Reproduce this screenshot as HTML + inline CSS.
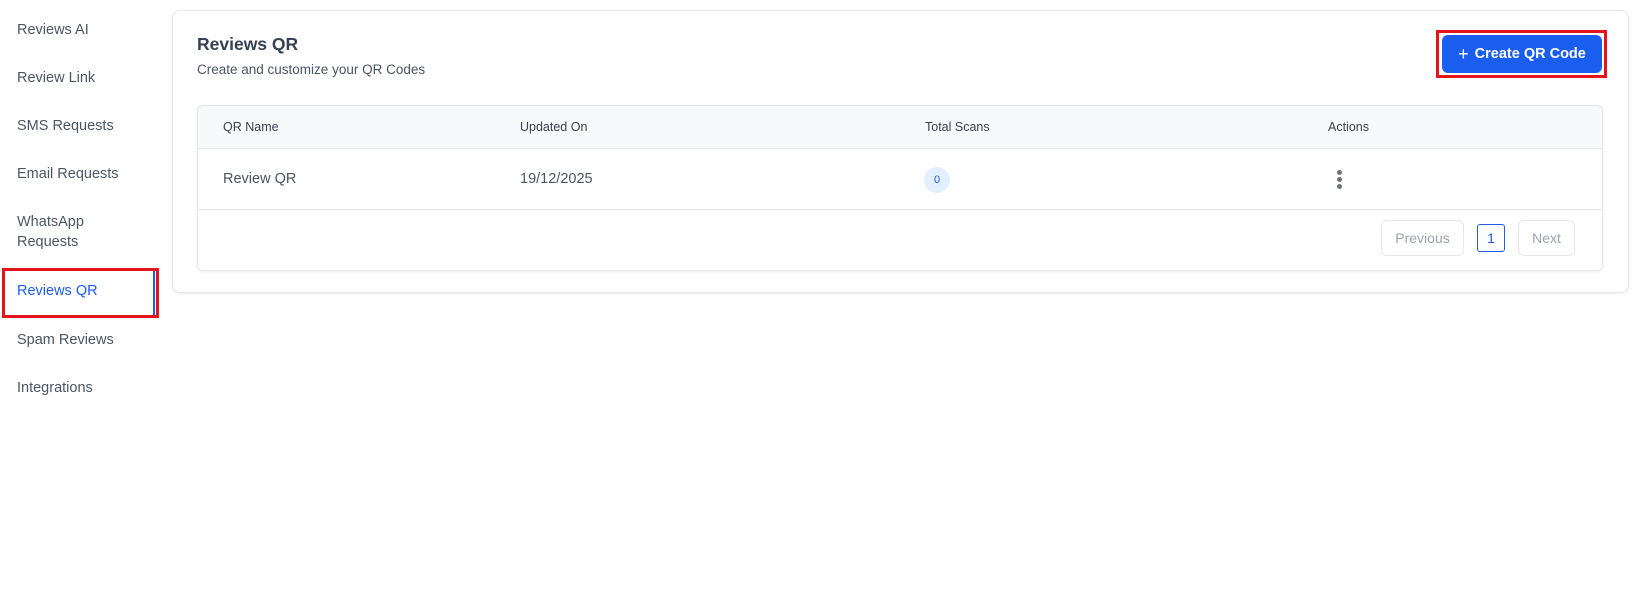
<!DOCTYPE html>
<html><head><style>
*{box-sizing:border-box;margin:0;padding:0}
body{width:1641px;height:600px;background:#fff;font-family:"Liberation Sans",Arial,sans-serif;position:relative;overflow:hidden;color:#374151}
.s{position:absolute;left:17px;font-size:14.5px;color:#4b5563;line-height:20px}
.card{position:absolute;left:172px;top:10px;width:1457px;height:283px;border:1px solid #e5e7eb;border-radius:8px;box-shadow:0 1px 3px rgba(0,0,0,.08)}
.tbl{position:absolute;left:197px;top:105px;width:1406px;height:166px;border:1px solid #e5e7eb;border-radius:6px;box-shadow:0 1px 3px rgba(0,0,0,.08);overflow:hidden}
.hd{position:absolute;left:0;top:0;width:100%;height:43px;background:#f8f9fb;border-bottom:1px solid #e5e7eb}
.row{position:absolute;left:0;top:43px;width:100%;height:61px;border-bottom:1px solid #e5e7eb}
.a{position:absolute;font-size:12.5px;color:#374151}
.c{position:absolute;font-size:14.5px;color:#4b5563}
.pb{position:absolute;border:1px solid #e5e7eb;border-radius:6px;color:#9ca3af;font-size:14px;display:flex;align-items:center;justify-content:center}
</style></head><body>
<div class="s" style="top:20px">Reviews AI</div>
<div class="s" style="top:68px">Review Link</div>
<div class="s" style="top:116px">SMS Requests</div>
<div class="s" style="top:164px">Email Requests</div>
<div class="s" style="top:212px">WhatsApp<br>Requests</div>
<div class="s" style="top:281px;color:#1d5cf0">Reviews QR</div>
<div style="position:absolute;left:2px;top:268px;width:157px;height:50px;border:3px solid #e3141b"></div>
<div style="position:absolute;left:153px;top:271px;width:2px;height:44px;background:#1d5cf0"></div>
<div class="s" style="top:330px">Spam Reviews</div>
<div class="s" style="top:378px">Integrations</div>

<div class="card"></div>
<div style="position:absolute;left:197px;top:34px;font-size:17.5px;font-weight:bold;color:#374151">Reviews QR</div>
<div style="position:absolute;left:197px;top:62px;font-size:13.5px;color:#4b5563">Create and customize your QR Codes</div>
<div style="position:absolute;left:1436px;top:30px;width:171px;height:48px;border:3px solid #e3141b"></div>
<div style="position:absolute;left:1442px;top:35px;width:160px;height:38px;background:#1a5ef0;border-radius:6px;color:#fff;font-size:14.5px;font-weight:bold;display:flex;align-items:center;justify-content:center;gap:6px"><span style="font-weight:normal;font-size:18px">+</span>Create QR Code</div>

<div class="tbl">
<div class="hd"></div>
<div class="row"></div>
<div class="a" style="left:25px;top:14px">QR Name</div>
<div class="a" style="left:322px;top:14px">Updated On</div>
<div class="a" style="left:727px;top:14px">Total Scans</div>
<div class="a" style="left:1130px;top:14px">Actions</div>
<div class="c" style="left:25px;top:65px">Review QR</div>
<div class="c" style="left:322px;top:65px">19/12/2025</div>
<div style="position:absolute;left:726px;top:61px;width:26px;height:26px;border-radius:50%;background:#e3effd;color:#1d5cf0;font-size:11px;display:flex;align-items:center;justify-content:center">0</div>
<div style="position:absolute;left:1139px;top:64px;width:5px">
<div style="width:5px;height:5px;border-radius:50%;background:#6b7280;margin-bottom:2px"></div>
<div style="width:5px;height:5px;border-radius:50%;background:#6b7280;margin-bottom:2px"></div>
<div style="width:5px;height:5px;border-radius:50%;background:#6b7280"></div></div>
<div class="pb" style="left:1183px;top:114px;width:83px;height:36px">Previous</div>
<div class="pb" style="left:1279px;top:118px;width:28px;height:28px;border-color:#1d5cf0;color:#1d5cf0;border-radius:3px">1</div>
<div class="pb" style="left:1320px;top:114px;width:57px;height:36px">Next</div>
</div>
</body></html>
